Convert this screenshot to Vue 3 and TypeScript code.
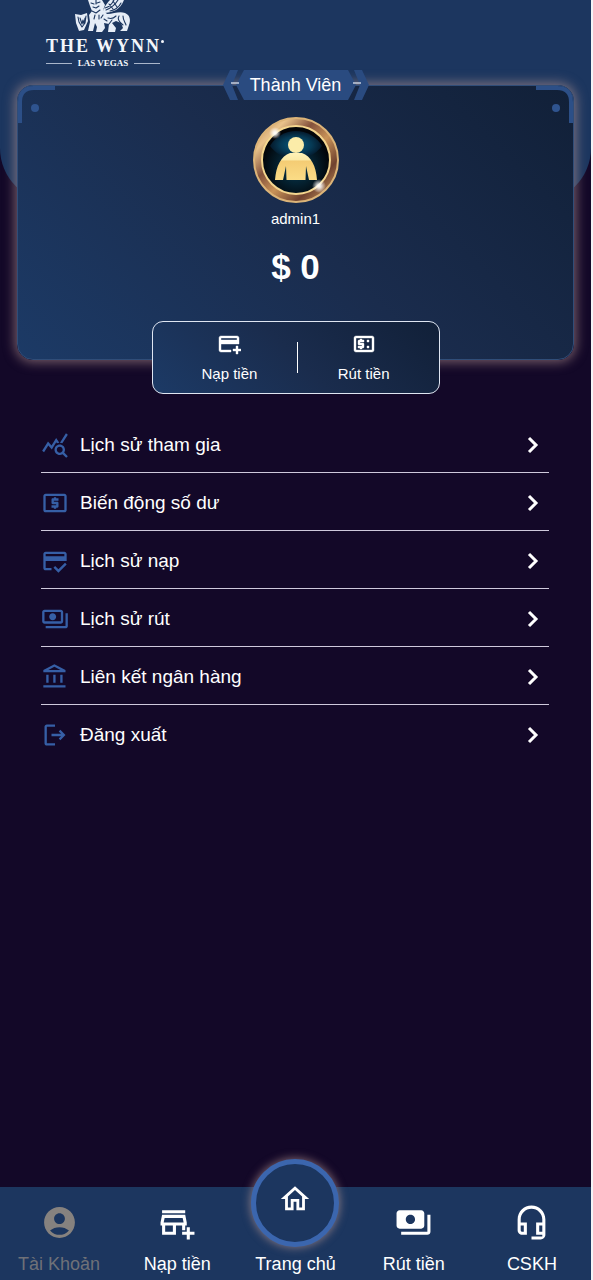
<script setup lang="ts">
interface Shortcut {
  label: string
  icon: string
}

interface Tab extends Shortcut {
  href: string
  active?: boolean
}

const icons: Record<string, string> = {
  stats:
    'M19.88 18.47c.44-.7.7-1.51.7-2.39 0-2.49-2.01-4.5-4.5-4.5s-4.5 2.01-4.5 4.5 2.01 4.5 4.49 4.5c.88 0 1.7-.26 2.39-.7L21.58 23 23 21.58l-3.12-3.11zm-3.8.11c-1.38 0-2.5-1.12-2.5-2.5s1.12-2.5 2.5-2.5 2.5 1.12 2.5 2.5-1.12 2.5-2.5 2.5zm-.36-8.5c-.74.02-1.45.18-2.1.45l-.55-.83-3.8 6.18-3.01-3.52-3.63 5.81L1 17l5-8 3 3.5L13 6l2.72 4.08zm2.59.5c-.64-.28-1.33-.45-2.05-.49L21.38 2 23 3.18l-4.69 7.4z',
  atm:
    'M11 17h2v-1h1c.55 0 1-.45 1-1v-3c0-.55-.45-1-1-1h-3v-1h4V8h-2V7h-2v1h-1c-.55 0-1 .45-1 1v3c0 .55.45 1 1 1h3v1H9v2h2v1zm9-13H4c-1.11 0-1.99.89-1.99 2L2 18c0 1.11.89 2 2 2h16c1.11 0 2-.89 2-2V6c0-1.11-.89-2-2-2zm0 14H4V6h16v12z',
  cardCheck:
    'M20 4H4c-1.11 0-1.99.89-1.99 2L2 18c0 1.11.89 2 2 2h5v-2H4v-6h18V6c0-1.11-.89-2-2-2zm0 4H4V6h16v2zm-5.07 11.17l-2.83-2.83-1.41 1.41L14.93 22 22 14.93l-1.41-1.41-5.66 5.65z',
  cardAdd:
    'M20 4H4c-1.11 0-1.99.89-1.99 2L2 18c0 1.11.89 2 2 2h10v-2H4v-6h18V6c0-1.11-.89-2-2-2zm0 4H4V6h16v2zm4 9v2h-3v3h-2v-3h-3v-2h3v-3h2v3h3z',
  cashOut:
    'M20 4H4c-1.11 0-2 .89-2 2v12c0 1.11.89 2 2 2h16c1.11 0 2-.89 2-2V6c0-1.11-.89-2-2-2zm0 14H4V6h16v12zM8 17h2v-1h1c.55 0 1-.45 1-1v-3c0-.55-.45-1-1-1H8v-1h4V8h-2V7H8v1H7c-.55 0-1 .45-1 1v3c0 .55.45 1 1 1h3v1H6v2h2v1zM15 8h2v2h-2zM15 14h2v2h-2z',
  notes:
    'M19 14V6c0-1.1-.9-2-2-2H3c-1.1 0-2 .9-2 2v8c0 1.1.9 2 2 2h14c1.1 0 2-.9 2-2zm-2 0H3V6h14v8zm-7-7c-1.66 0-3 1.34-3 3s1.34 3 3 3 3-1.34 3-3-1.34-3-3-3zm13 0v11c0 1.1-.9 2-2 2H4v-2h17V7h2z',
  notesSolid:
    'M19 14V6c0-1.1-.9-2-2-2H3c-1.1 0-2 .9-2 2v8c0 1.1.9 2 2 2h14c1.1 0 2-.9 2-2zm-9-1c-1.66 0-3-1.34-3-3s1.34-3 3-3 3 1.34 3 3-1.34 3-3 3zm13-6v11c0 1.1-.9 2-2 2H4v-2h17V7h2z',
  bank:
    'M6.5 10h-2v7h2v-7zm6 0h-2v7h2v-7zm8.5 9H2v2h19v-2zm-2.5-9h-2v7h2v-7zm-7-6.74L16.71 6H6.29l5.21-2.74m0-2.26L2 6v2h19V6l-9.5-5z',
  logout:
    'M5 3h7v2H5v14h7v2H5c-1.1 0-2-.9-2-2V5c0-1.1.9-2 2-2zM16.6 7.6L21 12l-4.4 4.4-1.4-1.4 2-2H9v-2h8.2l-2-2z',
  account:
    'M12 2C6.48 2 2 6.48 2 12s4.48 10 10 10 10-4.48 10-10S17.52 2 12 2zm0 4c1.93 0 3.5 1.57 3.5 3.5S13.93 13 12 13s-3.5-1.57-3.5-3.5S10.07 6 12 6zm0 14c-2.03 0-4.43-.82-6.14-2.88C7.55 15.8 9.68 15 12 15s4.45.8 6.14 2.12C16.43 19.18 14.03 20 12 20z',
  storeAdd:
    'M15 17h2v-3h1v-2l-1-5H2l-1 5v2h1v6h9v-6h4v3zm-6 1H4v-4h5v4zm-5.96-6l.6-3h11.72l.6 3H3.04zM2 4h15v2H2zM20 18v-3h-2v3h-3v2h3v3h2v-3h3v-2z',
  headset:
    'M19 14v4h-2v-4h2M7 14v4H6c-.55 0-1-.45-1-1v-3h2m5-13c-4.97 0-9 4.03-9 9v7c0 1.66 1.34 3 3 3h3v-8H5v-2c0-3.87 3.13-7 7-7s7 3.13 7 7v2h-4v8h4v1h-7v2h6c1.66 0 3-1.34 3-3V10c0-4.97-4.03-9-9-9z',
  home:
    'M12 5.69l5 4.5V18h-2v-6H9v6H7v-7.81l5-4.5M12 3L2 12h3v8h6v-6h2v6h6v-8h3L12 3z',
}

const menu: Shortcut[] = [
  { label: 'Lịch sử tham gia', icon: 'stats' },
  { label: 'Biến động số dư', icon: 'atm' },
  { label: 'Lịch sử nạp', icon: 'cardCheck' },
  { label: 'Lịch sử rút', icon: 'notes' },
  { label: 'Liên kết ngân hàng', icon: 'bank' },
  { label: 'Đăng xuất', icon: 'logout' },
]

const tabs: Tab[] = [
  { label: 'Tài Khoản', icon: 'account', href: '#account', active: true },
  { label: 'Nạp tiền', icon: 'storeAdd', href: '#deposit' },
  { label: 'Trang chủ', icon: 'home', href: '#home' },
  { label: 'Rút tiền', icon: 'notesSolid', href: '#withdraw' },
  { label: 'CSKH', icon: 'headset', href: '#support' },
]
</script>

<template>
  <div class="page">
    <header class="hero">
      <div class="logo">
        <svg class="lion" viewBox="0 0 58 34" aria-hidden="true">
          <g fill="#e6edf7">
            <path d="M14 0h14l3 5-2 5 4 4c7 0 12-3 18-1 5 2 6 7 4 12l-2 6h-7l3-3-2-5-5-2-4 2 4 5-1 4h-7l1-8-5-1 1 5-3 4h-6l1-5-2-4-2 8h-5l2-9-1-7 3-4-2-5z" />
            <path d="M29 10c2-4 5-8 7-10h14c-2 5-5 8-8 10-4 2-9 3-12 3z" />
            <path d="M1 14l6 1 6-2 1 8-4 9-5 1-3-8z" />
          </g>
          <g fill="none" stroke="#1c365f" stroke-width="1.1" stroke-linecap="round" stroke-linejoin="round">
            <path d="M17 3l3 1M23 3l3-1M19 7l3 1 3-2M18 11l4 2 4-3M21 15l-1 4M25 15v4M29 15l-2 3M22 0v4" />
            <path d="M32 10c5-2 9-5 12-10M31 8c4-1 7-4 9-8M36 11c5-1 9-4 11-8M35 4l4 5M39 1l4 6" />
            <path d="M34 18c3 1 6 0 8-2M45 16c-2 3 0 6 4 9M49 16c0 4 2 6 3 9M38 20l-3 4M30 19l3 2" />
            <path d="M4 17l1 5 3 5 3-4 1-7M6 18l2 6 1-4 1 4 1-6" />
          </g>
        </svg>
        <div class="logo-name">THE WYNN<span class="logo-mark"></span></div>
        <div class="logo-place">LAS VEGAS</div>
      </div>
    </header>

    <section class="card">
      <svg class="corner corner-left" viewBox="0 0 38 40" aria-hidden="true">
        <path d="M2 37V16Q2 2 16 2H37" fill="none" stroke="#2c4f87" stroke-width="4" />
        <circle cx="17" cy="22" r="4" fill="#2f548f" />
      </svg>
      <svg class="corner corner-right" viewBox="0 0 38 40" aria-hidden="true">
        <path d="M2 37V16Q2 2 16 2H37" fill="none" stroke="#2c4f87" stroke-width="4" />
        <circle cx="17" cy="22" r="4" fill="#2f548f" />
      </svg>

      <h1 class="rank">
        <svg class="rank-plate" viewBox="0 0 146 30" aria-hidden="true">
          <path d="M21 0h104l8 15-8 15H21l-8-15z" fill="#2a4b80" />
          <path d="M7 0h8L9 15l6 15H7L0 15z" fill="#2a4b80" />
          <path d="M139 0h-8l6 15-6 15h8l7-15z" fill="#2a4b80" />
          <path d="M8 13h8M130 13h8" stroke="#c3cddd" stroke-width="1.6" />
        </svg>
        <span class="rank-text">Thành Viên</span>
      </h1>

      <svg class="avatar" viewBox="0 0 86 86" role="img" aria-label="admin1">
        <defs>
          <linearGradient id="ring" x1="0" y1="0" x2="1" y2="1">
            <stop offset="0" stop-color="#b7774b" />
            <stop offset=".2" stop-color="#e9c38b" />
            <stop offset=".38" stop-color="#84523c" />
            <stop offset=".55" stop-color="#c99358" />
            <stop offset=".75" stop-color="#70422f" />
            <stop offset="1" stop-color="#dba966" />
          </linearGradient>
          <radialGradient id="glass" cx=".5" cy=".5" r=".5">
            <stop offset="0" stop-color="#075a80" />
            <stop offset=".6" stop-color="#063a55" />
            <stop offset="1" stop-color="#04182a" />
          </radialGradient>
          <radialGradient id="depth" cx=".5" cy=".6" r=".5">
            <stop offset="0" stop-color="#073e58" />
            <stop offset="1" stop-color="#020509" />
          </radialGradient>
          <linearGradient id="gold" x1="0" y1="0" x2="0" y2="1">
            <stop offset="0" stop-color="#fff2b8" />
            <stop offset=".25" stop-color="#fbeaa6" />
            <stop offset=".3" stop-color="#f4cc74" />
            <stop offset="1" stop-color="#fbdc86" />
          </linearGradient>
          <radialGradient id="spark">
            <stop offset="0" stop-color="#fff" />
            <stop offset=".3" stop-color="#fff" stop-opacity=".8" />
            <stop offset="1" stop-color="#fff" stop-opacity="0" />
          </radialGradient>
        </defs>
        <circle cx="43" cy="43" r="42" fill="url(#ring)" stroke="#dcb478" stroke-width="2" />
        <circle cx="43" cy="43" r="34" fill="url(#depth)" stroke="#f4d68f" stroke-width="2" />
        <path d="M17 29a30 30 0 0 1 52 0q-10 13-26 13t-26-13z" fill="url(#glass)" />
        <circle cx="43" cy="28" r="8" fill="#fbeca9" />
        <path d="M37 36h12c9 3 14 13 15 27h-8l-3-14-.5 14h-19L33 49l-3 14h-8c1-14 6-24 15-27z" fill="url(#gold)" />
        <circle cx="22" cy="16" r="6" fill="url(#spark)" />
        <circle cx="66" cy="69" r="7" fill="url(#spark)" />
      </svg>
      <p class="user">admin1</p>
      <p class="balance">$ 0</p>

      <div class="actions">
        <button type="button" class="action">
          <svg class="action-icon" viewBox="0 0 24 24" aria-hidden="true"><path :d="icons.cardAdd" /></svg>
          Nạp tiền
        </button>
        <span class="divider"></span>
        <button type="button" class="action">
          <svg class="action-icon" viewBox="0 0 24 24" aria-hidden="true"><path :d="icons.cashOut" /></svg>
          Rút tiền
        </button>
      </div>
    </section>

    <ul class="menu">
      <li v-for="item in menu" :key="item.label" class="menu-item">
        <button type="button" class="menu-button">
          <svg class="menu-icon" viewBox="0 0 24 24" aria-hidden="true"><path :d="icons[item.icon]" /></svg>
          <span class="menu-label">{{ item.label }}</span>
          <svg class="chevron" viewBox="0 0 12 18" aria-hidden="true"><path d="M2 2l7 7-7 7" /></svg>
        </button>
      </li>
    </ul>

    <nav class="tabs">
      <a
        v-for="tab in tabs"
        :key="tab.label"
        :href="tab.href"
        class="tab"
        :class="{ 'tab-active': tab.active, 'tab-home': tab.icon === 'home' }"
      >
        <span class="tab-badge">
          <svg class="tab-icon" viewBox="0 0 24 24" aria-hidden="true"><path :d="icons[tab.icon]" /></svg>
        </span>
        <span>{{ tab.label }}</span>
      </a>
    </nav>
  </div>
</template>

<style>
body {
  margin: 0;
  background: #f4f3f6;
}
</style>

<style scoped>
.page {
  display: flex;
  flex-direction: column;
  box-sizing: border-box;
  min-height: 100vh;
  margin-right: 2px;
  background: #130828;
  color: #fff;
  font-family: "Liberation Sans", Arial, sans-serif;
}

button {
  padding: 0;
  border: 0;
  background: none;
  color: inherit;
  font: inherit;
  cursor: pointer;
}

.hero {
  box-sizing: border-box;
  height: 202px;
  padding-left: 45px;
  border-radius: 0 0 54px 54px;
  background: #1c365f;
}

.logo {
  display: flex;
  flex-direction: column;
  align-items: center;
  width: 116px;
  color: #f3f6fb;
  font-family: "Liberation Serif", "Times New Roman", serif;
  font-weight: bold;
}

.lion {
  width: 58px;
  height: 34px;
}

.logo-name {
  display: flex;
  margin-top: 2px;
  padding-left: 4px;
  font-size: 18px;
  line-height: 20px;
  letter-spacing: 2px;
  white-space: nowrap;
}

.logo-mark {
  width: 3px;
  height: 3px;
  margin-top: 4px;
  border-radius: 50%;
  background: currentColor;
}

.logo-place {
  display: flex;
  align-items: center;
  gap: 6px;
  margin-top: 2px;
  font-size: 9px;
  line-height: 11px;
  white-space: nowrap;
}

.logo-place::before,
.logo-place::after {
  content: "";
  width: 26px;
  height: 1px;
  background: #a9b6cb;
}

.card {
  position: relative;
  display: flex;
  flex-direction: column;
  align-items: center;
  margin: -117px 17px 0;
  padding-top: 31px;
  border: 1px solid #304d78;
  border-radius: 16px;
  background: linear-gradient(45deg, #1c3a66 0%, #1a2c4d 50%, #112038 100%);
  box-shadow: 0 0 12px 2px rgba(190, 155, 150, 0.6);
}

.corner {
  position: absolute;
  top: 0;
  width: 38px;
  height: 40px;
}

.corner-left {
  left: 0;
}

.corner-right {
  right: 0;
  transform: scaleX(-1);
}

.rank {
  position: absolute;
  top: -16px;
  display: grid;
  place-items: center;
  margin: 0;
  font-size: 18px;
  font-weight: normal;
  line-height: 30px;
}

.rank-plate,
.rank-text {
  grid-area: 1 / 1;
}

.rank-plate {
  width: 146px;
  height: 30px;
}

.rank-text {
  z-index: 1;
}

.avatar {
  width: 86px;
  height: 86px;
}

.user {
  margin: 6px 0 0;
  font-size: 15px;
  line-height: 20px;
}

.balance {
  margin: 17px 0 0;
  font-size: 35px;
  font-weight: bold;
  line-height: 42px;
}

.actions {
  display: flex;
  align-items: center;
  justify-content: space-between;
  box-sizing: border-box;
  width: 288px;
  height: 73px;
  margin: 33px 0 -35px;
  padding: 0 49px;
  border: 1px solid #dfe6f2;
  border-radius: 11px;
  background: linear-gradient(45deg, #1c3a66 0%, #1a2c4d 50%, #112038 100%);
}

.action {
  display: flex;
  flex-direction: column;
  align-items: center;
  gap: 8px;
  font-size: 15px;
  line-height: 20px;
}

.action-icon {
  width: 24px;
  height: 24px;
  fill: #fff;
  stroke: #fff;
  stroke-width: 0.4;
}

.divider {
  width: 1px;
  height: 31px;
  background: #fff;
}

.menu {
  margin: 55px 42px 40px 41px;
  padding: 0;
  list-style: none;
}

.menu-item + .menu-item {
  border-top: 1px solid #cfc9dc;
}

.menu-button {
  display: flex;
  align-items: center;
  gap: 11px;
  width: 100%;
  height: 57px;
  padding: 3px 10px 0 0;
  font-size: 19px;
  line-height: 24px;
  text-align: left;
}

.menu-icon {
  width: 28px;
  height: 28px;
  fill: #365fa6;
}

.menu-label {
  flex: 1;
}

.chevron {
  width: 12px;
  height: 18px;
  fill: none;
  stroke: #fff;
  stroke-width: 3;
}

.tabs {
  display: grid;
  grid-template-columns: repeat(5, 1fr);
  margin-top: auto;
  background: #1c365f;
}

.tab {
  display: flex;
  flex-direction: column;
  align-items: center;
  padding: 17px 0 5px;
  color: #fff;
  font-size: 18px;
  line-height: 22px;
  text-decoration: none;
}

.tab-active {
  color: #6f7178;
}

.tab-badge {
  display: flex;
  height: 49px;
}

.tab-icon {
  width: 37px;
  height: 37px;
  fill: currentColor;
}

.tab-active .tab-icon {
  fill: #86827f;
}

.tab-home .tab-badge {
  align-items: flex-start;
  justify-content: center;
  box-sizing: border-box;
  width: 88px;
  height: 88px;
  margin: -45px 0 6px;
  padding-top: 18px;
  border: 5px solid #3b66ae;
  border-radius: 50%;
  background: #1c365f;
  box-shadow: 0 0 9px 1px rgba(190, 155, 150, 0.6);
}

.tab-home .tab-icon {
  width: 34px;
  height: 34px;
}
</style>
